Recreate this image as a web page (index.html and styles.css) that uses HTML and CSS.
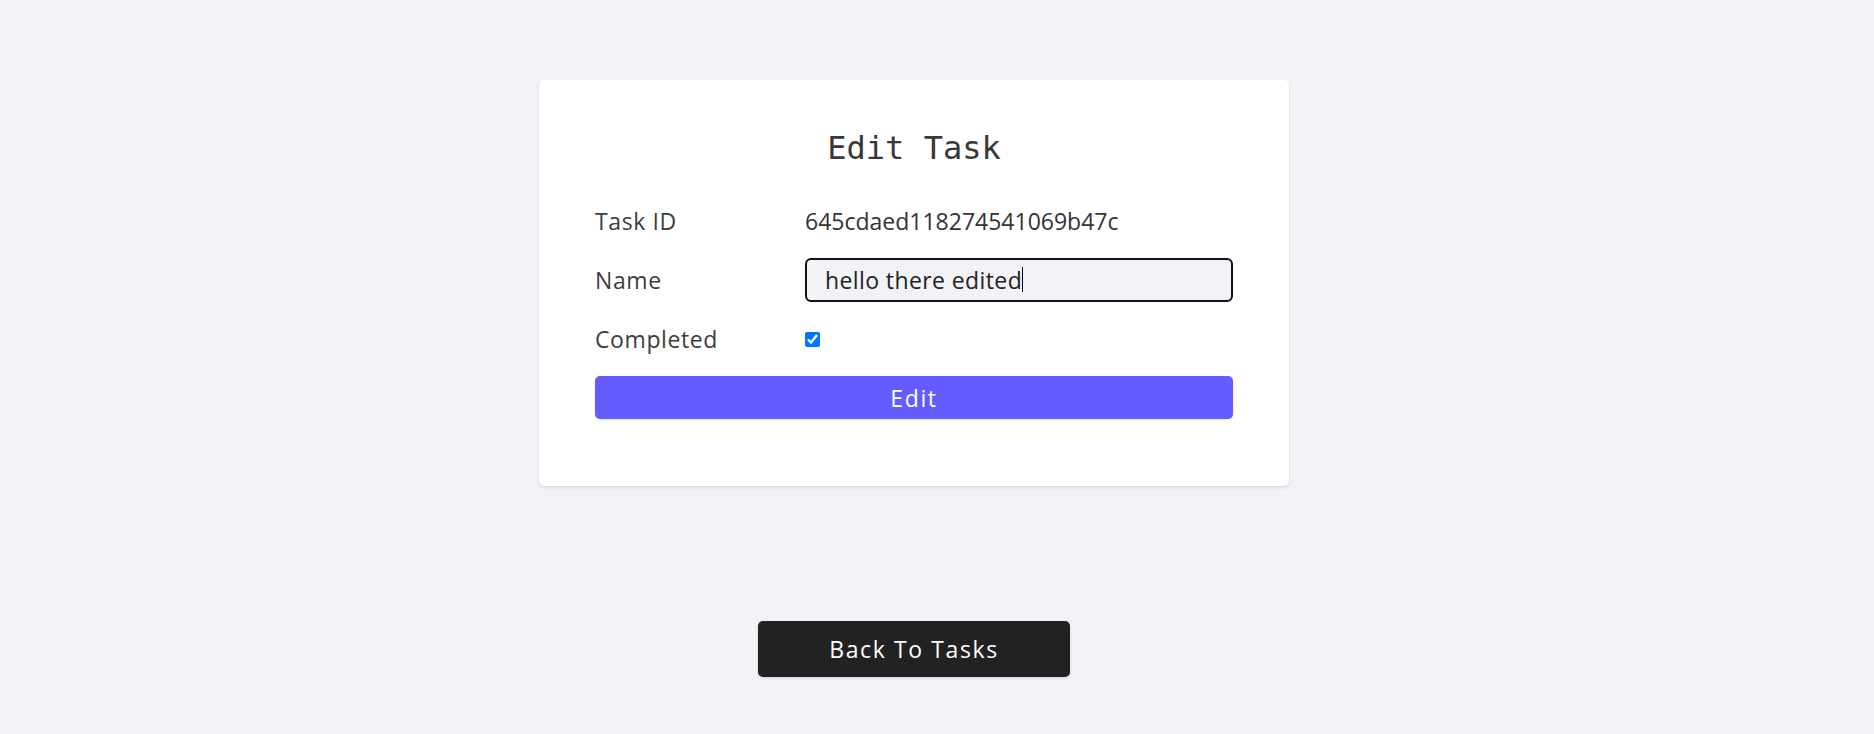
FILE: index.html
```html
<!DOCTYPE html>
<html lang="en">
<head>
<meta charset="utf-8">
<title>Edit Task</title>
<link rel="stylesheet" href="styles.css">
</head>
<body>
<main class="page">
  <form class="card">
    <h4 class="title">Edit Task</h4>
    <div class="row">
      <span class="label">Task ID</span>
      <span class="value">645cdaed118274541069b47c</span>
    </div>
    <div class="row">
      <label class="label" for="name">Name</label>
      <div class="input-wrap"><input id="name" class="text-input" type="text" value="hello there edited"><span class="caret"></span></div>
    </div>
    <div class="row">
      <label class="label" for="completed">Completed</label>
      <input id="completed" class="check" type="checkbox" checked>
    </div>
    <button type="button" class="submit">Edit</button>
  </form>
  <a class="back" href="#">Back To Tasks</a>
</main>
</body>
</html>
```
FILE: styles.css
```css
* { box-sizing: border-box; }
html, body { margin: 0; padding: 0; }
body {
  background: #f2f3f7;
  font-family: "Open Sans", "DejaVu Sans", sans-serif;
  color: #333;
  height: 734px;
}
.page {
  display: flex;
  flex-direction: column;
  align-items: center;
  padding: 80px 46px 0 0;
}
.card {
  width: 750px;
  background: #fff;
  border-radius: 5px;
  box-shadow: 0 2px 4px rgba(0,0,0,0.08), 0 1px 2px rgba(0,0,0,0.05);
  padding: 48px 56px 67px;
  display: flex;
  flex-direction: column;
  gap: 15px;
}
.title {
  margin: 0 0 16px;
  font-family: "DejaVu Sans Mono", "Liberation Mono", monospace;
  font-weight: 400;
  font-size: 32px;
  line-height: 40px;
  text-align: center;
  color: #383838;
  letter-spacing: 0;
}
.row {
  display: grid;
  grid-template-columns: 210px 1fr;
  align-items: center;
  height: 44px;
}
.label, .value {
  font-size: 23px;
  line-height: 31px;
  color: #3d3d3d;
  letter-spacing: 0.6px;
}
.value { color: #333; letter-spacing: 0; }
.input-wrap { position: relative; }
.text-input {
  width: 100%;
  height: 44px;
  border: 2px solid #111;
  border-radius: 6px;
  background: #f2f3f7;
  padding: 0 18px;
  font-family: "Open Sans", "DejaVu Sans", sans-serif;
  font-size: 23px;
  color: #222;
  letter-spacing: 0.4px;
  outline: none;
}
.caret {
  position: absolute;
  left: 217px;
  top: 9px;
  width: 1px;
  height: 25px;
  background: #000;
}
.check {
  margin: 0;
  width: 15px;
  height: 15px;
  accent-color: #0075ff;
}
.submit {
  height: 43px;
  border: none;
  border-radius: 5px;
  background: #645cff;
  color: #fff;
  font-family: "Open Sans", "DejaVu Sans", sans-serif;
  font-size: 23px;
  letter-spacing: 1.6px;
  box-shadow: 0 1px 3px rgba(0,0,0,0.1);
  padding: 0;
}
.back {
  margin-top: 135px;
  width: 312px;
  height: 56px;
  display: flex;
  align-items: center;
  justify-content: center;
  background: #222;
  color: #fff;
  border-radius: 5px;
  text-decoration: none;
  font-size: 23px;
  letter-spacing: 1.6px;
  box-shadow: 0 1px 3px rgba(0,0,0,0.15);
}
```
